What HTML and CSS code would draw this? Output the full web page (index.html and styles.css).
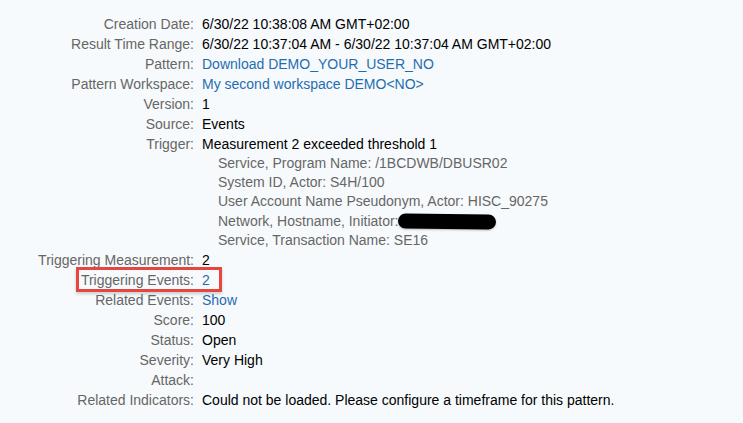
FILE: index.html
```html
<!DOCTYPE html>
<html lang="en">
<head>
<meta charset="utf-8">
<title>Alert Details</title>
<link rel="stylesheet" href="styles.css">
</head>
<body>
<div class="details">
  <div class="row"><span class="label">Creation Date:</span><span class="value">6/30/22 10:38:08 AM GMT+02:00</span></div>
  <div class="row"><span class="label">Result Time Range:</span><span class="value">6/30/22 10:37:04 AM - 6/30/22 10:37:04 AM GMT+02:00</span></div>
  <div class="row"><span class="label">Pattern:</span><a class="value link" href="#">Download DEMO_YOUR_USER_NO</a></div>
  <div class="row"><span class="label">Pattern Workspace:</span><a class="value link" href="#">My second workspace DEMO&lt;NO&gt;</a></div>
  <div class="row"><span class="label">Version:</span><span class="value">1</span></div>
  <div class="row"><span class="label">Source:</span><span class="value">Events</span></div>
  <div class="row"><span class="label">Trigger:</span>
    <div class="value">
      <div>Measurement 2 exceeded threshold 1</div>
      <ul class="subs">
        <li>Service, Program Name: /1BCDWB/DBUSR02</li>
        <li>System ID, Actor: S4H/100</li>
        <li>User Account Name Pseudonym, Actor: HISC_90275</li>
        <li>Network, Hostname, Initiator:<span class="redact"></span></li>
        <li>Service, Transaction Name: SE16</li>
      </ul>
    </div>
  </div>
  <div class="row"><span class="label">Triggering Measurement:</span><span class="value">2</span></div>
  <div class="row marked"><span class="label">Triggering Events:</span><a class="value link" href="#">2</a></div>
  <div class="row"><span class="label">Related Events:</span><a class="value link" href="#">Show</a></div>
  <div class="row"><span class="label">Score:</span><span class="value">100</span></div>
  <div class="row"><span class="label">Status:</span><span class="value">Open</span></div>
  <div class="row"><span class="label">Severity:</span><span class="value">Very High</span></div>
  <div class="row"><span class="label">Attack:</span><span class="value"></span></div>
  <div class="row"><span class="label">Related Indicators:</span><span class="value">Could not be loaded. Please configure a timeframe for this pattern.</span></div>
</div>
</body>
</html>
```

FILE: styles.css
```css
html, body {
  margin: 0;
  padding: 0;
  background: #f7fafc;
}
body {
  font-family: "Liberation Sans", Arial, sans-serif;
  font-size: 14px;
  color: #000;
}
.details {
  padding-top: 14px;
  display: flex;
  flex-direction: column;
}
.row {
  display: grid;
  grid-template-columns: 194px 1fr;
  column-gap: 8px;
  line-height: 20px;
}
.label {
  text-align: right;
  color: #666;
  white-space: nowrap;
}
.value {
  color: #000;
  white-space: nowrap;
}
.link {
  color: #1f6db0;
  text-decoration: none;
}
.subs {
  list-style: none;
  margin: 0;
  padding: 0 0 0 16px;
  color: #666;
  line-height: 19.2px;
}
.redact {
  display: inline-block;
  width: 98px;
  height: 15px;
  margin-left: -1px;
  border-radius: 8px;
  background: #000;
  vertical-align: -3px;
  transform: rotate(0.6deg);
  box-shadow: 0 1px 2px rgba(0, 0, 0, 0.25);
}
.marked {
  position: relative;
}
.marked::after {
  content: "";
  position: absolute;
  left: 76px;
  top: -3px;
  width: 140px;
  height: 19px;
  border: 3px solid #e5463d;
  box-shadow: 0 2px 3px rgba(0, 0, 0, 0.18);
}
```
